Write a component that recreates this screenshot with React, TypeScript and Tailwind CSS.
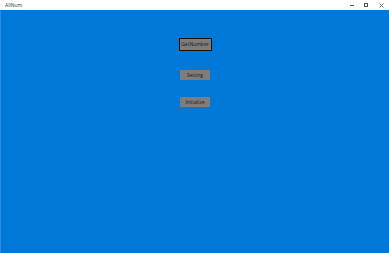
import React from "react";

const Btn = ({ label }: { label: string }) => (
  <button className="w-[30px] h-[10px] flex items-center justify-center bg-[#7d7d7d] text-[#1a1a1a] text-[5px] leading-none">
    {label}
  </button>
);

const App = () => {
  return (
    <div
      className="w-[389px] h-[253px] flex flex-col bg-[#0078d7] overflow-hidden"
      style={{ fontFamily: '"Segoe UI", "Open Sans", "Liberation Sans", sans-serif' }}
    >
      <div className="h-[10px] bg-white flex items-center justify-between">
        <div className="pl-[5px] text-[5px] leading-none text-[#333]">AllNum</div>
        <div className="flex items-center h-full text-[#444]">
          <div className="w-[14px] h-full flex items-center justify-center">
            <div className="w-[4px] h-px bg-[#555]" />
          </div>
          <div className="w-[14px] h-full flex items-center justify-center">
            <div className="w-[4px] h-[4px] border border-[#555]" />
          </div>
          <div className="w-[16px] h-full flex items-center justify-center">
            <svg width="5" height="5" viewBox="0 0 5 5">
              <path d="M0.5 0.5 L4.5 4.5 M4.5 0.5 L0.5 4.5" stroke="#555" strokeWidth="0.8" />
            </svg>
          </div>
        </div>
      </div>
      <div className="flex-1 flex flex-col items-center pt-[28px] border-l border-[#2b8ae0]">
        <button className="w-[33px] h-[13px] flex items-center justify-center bg-[#7d7d7d] text-[#1a1a1a] text-[5px] leading-none border border-[#111]">
          GetNumber
        </button>
        <div className="mt-[19px]">
          <Btn label="Setting" />
        </div>
        <div className="mt-[17px]">
          <Btn label="Initialize" />
        </div>
      </div>
    </div>
  );
};

export default App;
